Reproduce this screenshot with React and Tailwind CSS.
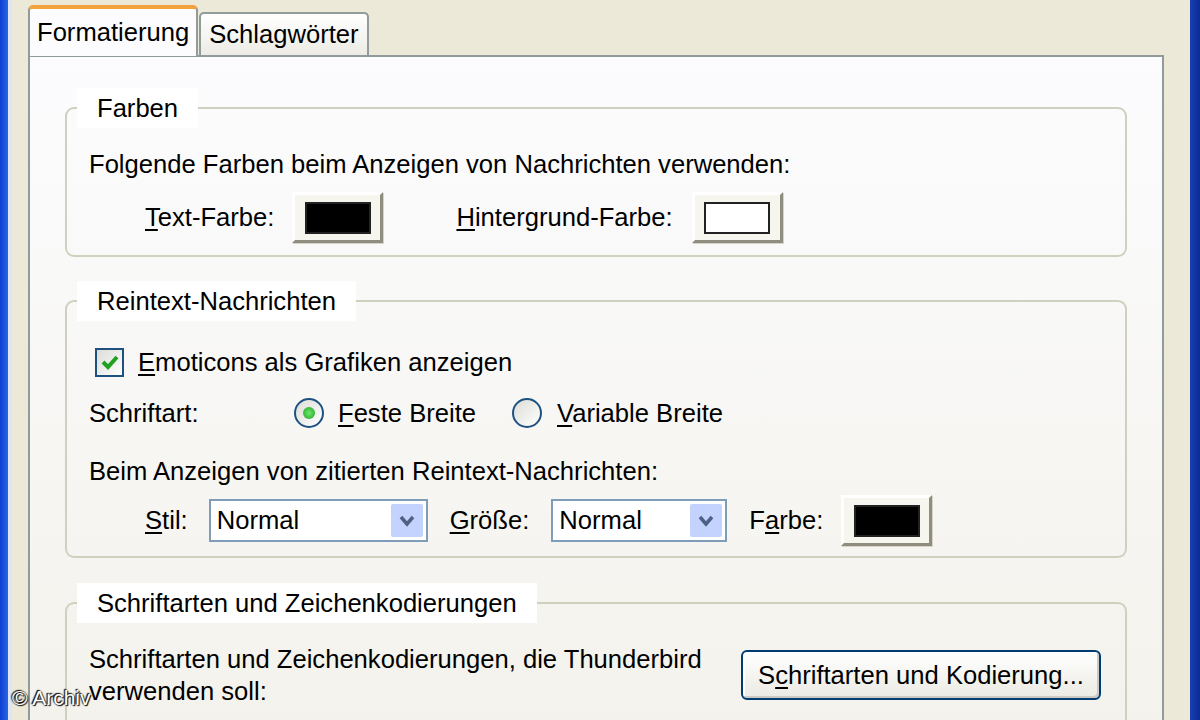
import React from "react";

const font = "font-['Liberation_Sans',Arial,sans-serif]";

function U({ children }) {
  return <span className="underline underline-offset-[3px] decoration-[2px]">{children}</span>;
}

function ColorButton({ color = "bg-black" }) {
  return (
    <div className="w-[91px] h-[51px] bg-[#f7f6ee] border-t-[3px] border-l-[3px] border-t-white border-l-white border-r-[3px] border-b-[3px] border-r-[#8f8d80] border-b-[#8f8d80] flex items-center justify-center shadow-[1px_1px_0_#d7d4c4]">
      <div className={`w-[66px] h-[32px] border-[2px] border-[#222] ${color}`}></div>
    </div>
  );
}

function Select({ value, width = "w-[219px]" }) {
  return (
    <div className={`${width} h-[43px] border-[2px] border-[#7f9db9] bg-white flex items-center justify-between pl-[6px] pr-[3px]`}>
      <span>{value}</span>
      <div className="w-[32px] h-[33px] bg-[#c3d3fd] rounded-[2px] flex items-center justify-center">
        <svg width="16" height="12" viewBox="0 0 16 12">
          <path d="M2 2 L8 9 L14 2" fill="none" stroke="#4d6185" strokeWidth="3.5" />
        </svg>
      </div>
    </div>
  );
}

function Group({ title, children, className = "" }) {
  return (
    <fieldset className={`mx-[35px] border-[2px] border-[#d0d0bf] rounded-[9px] px-[22px] ${className}`}>
      <legend className="-ml-[12px] px-[20px] h-[40px] leading-[40px] bg-white">{title}</legend>
      {children}
    </fieldset>
  );
}

export default function App() {
  return (
    <div className={`relative w-[1200px] h-[720px] overflow-hidden flex bg-[#ece9d8] text-[25.6px] text-black ${font}`}>
      <div className="w-[8px] bg-gradient-to-r from-[#0b3fd0] to-[#2a63e8]"></div>
      <div className="w-[4px] bg-[#dfe6f3]"></div>
      <div className="flex-1 flex flex-col pl-[16px] pr-[26px] pt-[5px]">
        {/* Tabs */}
        <div className="flex items-end h-[50px]">
          <div className="relative z-10 h-[51px] -mb-[1px] px-[7px] flex items-center bg-[#fcfcfe] border-x-[2px] border-[#919b9c] border-t-[4px] border-t-[#f3a33b] rounded-t-[5px]">
            Formatierung
          </div>
          <div className="h-[43px] px-[8px] ml-[1px] flex items-center bg-gradient-to-b from-white to-[#ecebe5] border-x-[2px] border-t-[2px] border-[#919b9c] rounded-t-[5px]">
            Schlagwörter
          </div>
        </div>
        {/* Panel */}
        <div className="flex-1 border-[2px] border-b-0 border-[#919b9c] bg-gradient-to-b from-[#fcfcfe] to-[#f3f2ec] pt-[31px]">
          <Group title="Farben" className="pb-[12px]">
            <div className="pt-[21px] leading-[30px]">Folgende Farben beim Anzeigen von Nachrichten verwenden:</div>
            <div className="flex items-center mt-[13px] pl-[56px]">
              <span><U>T</U>ext-Farbe:</span>
              <div className="ml-[18px]"><ColorButton /></div>
              <span className="ml-[73px]"><U>H</U>intergrund-Farbe:</span>
              <div className="ml-[19px]"><ColorButton color="bg-white" /></div>
            </div>
          </Group>

          <Group title="Reintext-Nachrichten" className="mt-[24px] pb-[10px]">
            <div className="flex items-center pt-[26px] pl-[6px] h-[56px]">
              <div className="w-[29px] h-[29px] border-[2px] border-[#1c5180] bg-gradient-to-br from-[#dcdcd7] to-white flex items-center justify-center">
                <svg width="18" height="16" viewBox="0 0 18 16">
                  <path d="M2 8 L7 13 L16 3" fill="none" stroke="#21a121" strokeWidth="4" />
                </svg>
              </div>
              <span className="ml-[14px]"><U>E</U>moticons als Grafiken anzeigen</span>
            </div>
            <div className="flex items-center mt-[21px] h-[30px]">
              <span className="w-[205px]">Schriftart:</span>
              <div className="w-[30px] h-[30px] rounded-full border-[2px] border-[#1c5180] bg-gradient-to-br from-[#dcdcd7] to-white flex items-center justify-center">
                <div className="w-[12px] h-[12px] rounded-full bg-[radial-gradient(circle,#6ee86e,#21a121)]"></div>
              </div>
              <span className="ml-[14px]"><U>F</U>este Breite</span>
              <div className="ml-[36px] w-[30px] h-[30px] rounded-full border-[2px] border-[#1c5180] bg-gradient-to-br from-[#dcdcd7] to-white"></div>
              <span className="ml-[15px]"><U>V</U>ariable Breite</span>
            </div>
            <div className="mt-[28px] leading-[30px]">Beim Anzeigen von zitierten Reintext-Nachrichten:</div>
            <div className="flex items-center mt-[9px] pl-[56px]">
              <span><U>S</U>til:</span>
              <div className="ml-[21px]"><Select value="Normal" /></div>
              <span className="ml-[22px]"><U>G</U>röße:</span>
              <div className="ml-[22px]"><Select value="Normal" width="w-[176px]" /></div>
              <span className="ml-[22px]">F<U>a</U>rbe:</span>
              <div className="ml-[18px]"><ColorButton /></div>
            </div>
          </Group>

          <Group title="Schriftarten und Zeichenkodierungen" className="mt-[25px] pb-[20px]">
            <div className="flex items-center justify-between pt-[20px]">
              <div className="leading-[32px]">
                Schriftarten und Zeichenkodierungen, die Thunderbird
                <br />
                verwenden soll:
              </div>
              <div className="mr-[2px] w-[360px] h-[50px] rounded-[6px] border-[2px] border-[#003c74] bg-gradient-to-b from-white to-[#ebeae3] shadow-[inset_-2px_-2px_0_#cdcac3,inset_2px_2px_0_#fff] flex items-center justify-center">
                S<U>c</U>hriftarten und Kodierung...
              </div>
            </div>
          </Group>
        </div>
      </div>
      <div className="w-[10px] bg-gradient-to-r from-[#1a3fb0] to-[#0a2b97]"></div>
      <div className="absolute left-[12px] top-[682px] text-[21px] text-white [text-shadow:0_0_2px_#222,1px_1px_1px_#000,-1px_-1px_1px_#000]">
        © Archiv
      </div>
    </div>
  );
}
